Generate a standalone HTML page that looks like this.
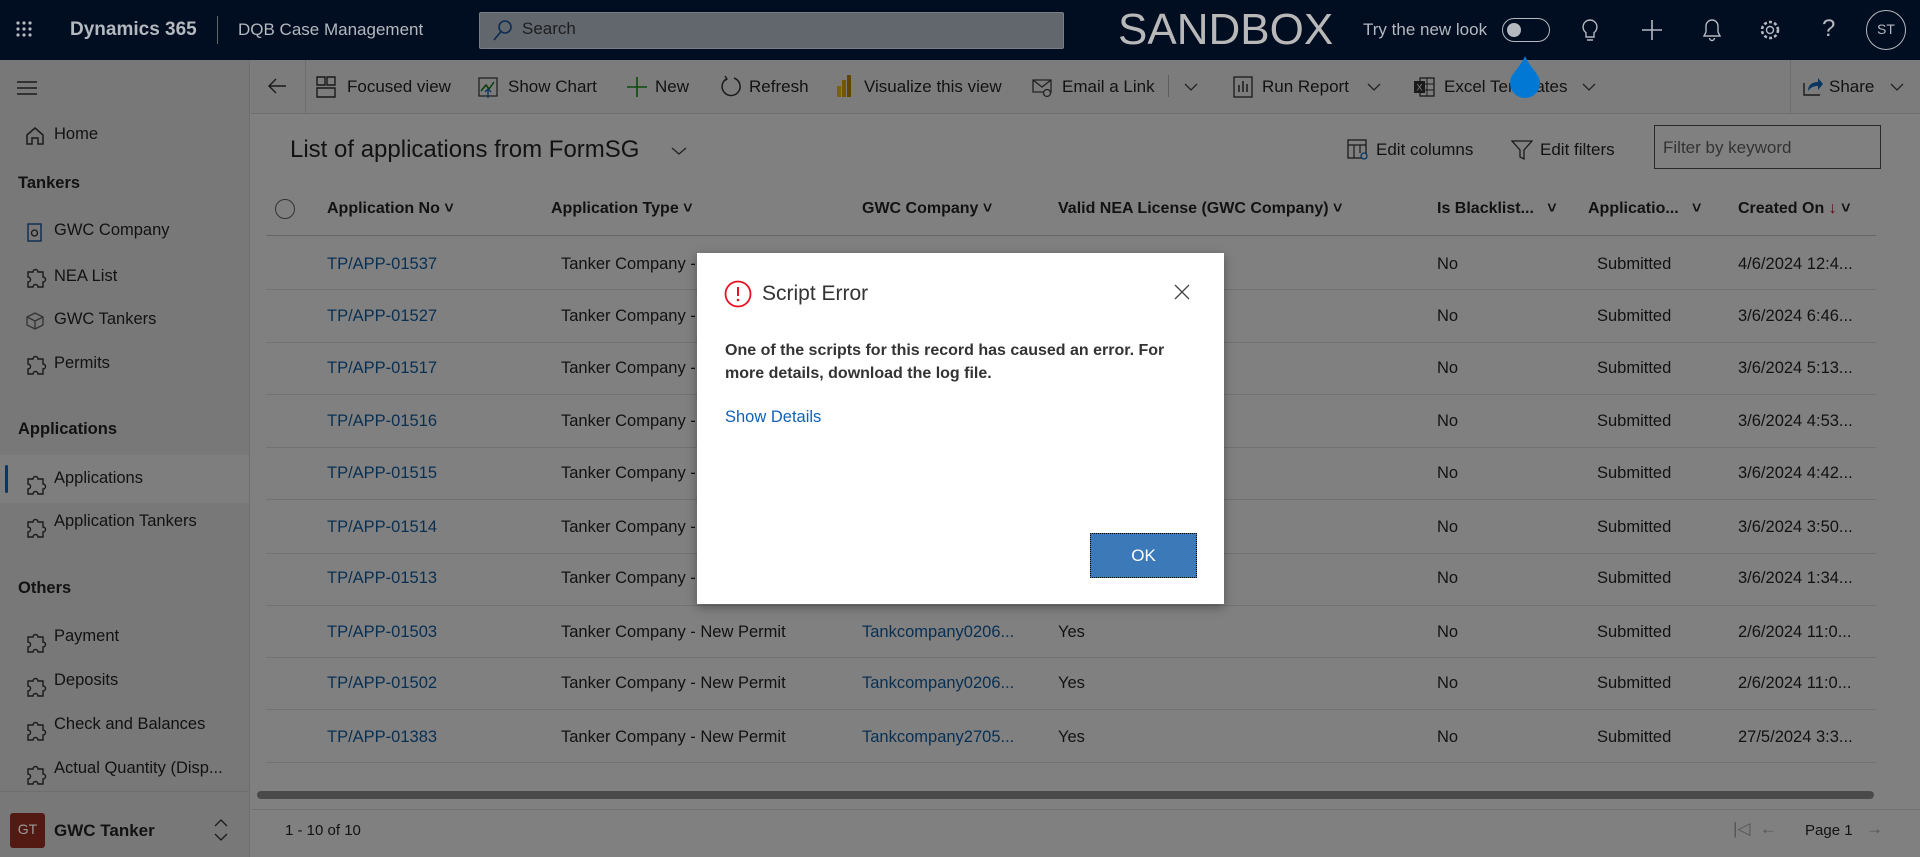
<!DOCTYPE html>
<html><head><meta charset="utf-8"><style>
*{box-sizing:border-box;margin:0;padding:0}
html,body{background:#808080}
body{width:1920px;height:857px;overflow:hidden;position:relative;font-family:"Liberation Sans",sans-serif;color:#121212}
.a{position:absolute;white-space:nowrap}
.hdr{position:absolute;left:0;top:0;width:1920px;height:60px;background:#010d20;color:#b4b8bf}
.side{position:absolute;left:0;top:60px;width:250px;height:797px;background:#787878;border-right:1px solid #6e6e6e}
.si{position:absolute;left:54px;font-size:16.5px;color:#121212}
.sh{position:absolute;left:18px;font-size:16.5px;font-weight:bold;color:#121212}
.ic{position:absolute;left:24px;width:22px;height:22px}
.tb{position:absolute;left:251px;top:60px;width:1669px;height:54px;background:#7c7c7c;border-bottom:1px solid #6e6e6e}
.tt{position:absolute;top:77px;font-size:17px;color:#121212}
.col{position:absolute;top:200px;font-size:16px;font-weight:bold;color:#121212}
.cell{position:absolute;font-size:16.5px;color:#121212}
.lk{color:#082f52}
.row{position:absolute;left:266px;width:1610px;height:1px;background:#727272}
</style></head><body>
<div class="hdr">
 <svg class="a" style="left:15px;top:20px" width="18" height="18"><g fill="#b4b8bf"><circle cx="3" cy="3" r="1.6"/><circle cx="9" cy="3" r="1.6"/><circle cx="15" cy="3" r="1.6"/><circle cx="3" cy="9" r="1.6"/><circle cx="9" cy="9" r="1.6"/><circle cx="15" cy="9" r="1.6"/><circle cx="3" cy="15" r="1.6"/><circle cx="9" cy="15" r="1.6"/><circle cx="15" cy="15" r="1.6"/></g></svg>
 <div class="a" style="left:70px;top:19px;font-size:19px;font-weight:bold">Dynamics 365</div>
 <div class="a" style="left:217px;top:16px;width:1px;height:28px;background:#666"></div>
 <div class="a" style="left:238px;top:20px;font-size:17px">DQB Case Management</div>
 <div class="a" style="left:479px;top:12px;width:585px;height:37px;background:#62666d;border:1px solid #7a7e84;border-radius:2px"></div>
 <svg class="a" style="left:492px;top:19px" width="22" height="24"><circle cx="13" cy="8" r="6" fill="none" stroke="#0c2c50" stroke-width="1.6"/><line x1="9" y1="12.5" x2="2" y2="21" stroke="#0c2c50" stroke-width="1.6"/></svg>
 <div class="a" style="left:522px;top:19px;font-size:17px;color:#1e1e1e">Search</div>
 <div class="a" style="left:1118px;top:5px;font-size:44px;color:#b8b8b8">SANDBOX</div>
 <div class="a" style="left:1363px;top:20px;font-size:17px">Try the new look</div>
 <div class="a" style="left:1502px;top:18px;width:48px;height:24px;border:1.5px solid #b4b8bf;border-radius:12px"></div>
 <div class="a" style="left:1507px;top:23px;width:14px;height:14px;border-radius:50%;background:#b4b8bf"></div>
 <svg class="a" style="left:1580px;top:18px" width="20" height="26"><path d="M10 2a7 7 0 0 0-4 12.7V19h8v-4.3A7 7 0 0 0 10 2zM7 22h6" fill="none" stroke="#b4b8bf" stroke-width="1.4"/></svg>
 <svg class="a" style="left:1641px;top:19px" width="22" height="22"><path d="M11 1v20M1 11h20" stroke="#b4b8bf" stroke-width="1.6"/></svg>
 <svg class="a" style="left:1702px;top:18px" width="20" height="24"><path d="M10 2a6 6 0 0 0-6 6v6l-2 4h16l-2-4V8a6 6 0 0 0-6-6zM7.5 20a2.5 2.5 0 0 0 5 0" fill="none" stroke="#b4b8bf" stroke-width="1.4"/></svg>
 <svg class="a" style="left:1758px;top:18px" width="24" height="24"><circle cx="12" cy="12" r="3.5" fill="none" stroke="#b4b8bf" stroke-width="1.4"/><circle cx="12" cy="12" r="8" fill="none" stroke="#b4b8bf" stroke-width="2.6" stroke-dasharray="3 2.2"/></svg>
 <div class="a" style="left:1822px;top:15px;font-size:24px">?</div>
 <div class="a" style="left:1866px;top:10px;width:40px;height:40px;border:1.5px solid #b4b8bf;border-radius:50%;font-size:14px;text-align:center;line-height:37px">ST</div>
</div>

<div class="side">
 <svg class="a" style="left:17px;top:21px" width="22" height="14"><path d="M0 1h20M0 7h20M0 13h20" stroke="#1a1a1a" stroke-width="1.4"/></svg>
 <svg class="ic" style="top:65px" viewBox="0 0 22 22"><path d="M3 10L11 3l8 7v9h-5v-6h-6v6H3z" fill="none" stroke="#1a1a1a" stroke-width="1.5"/></svg>
 <div class="si" style="top:65px">Home</div>
 <div class="sh" style="top:114px">Tankers</div>
 <svg class="ic" style="top:161px" viewBox="0 0 22 22"><rect x="4" y="3" width="13" height="17" fill="none" stroke="#0c2c50" stroke-width="1.4"/><circle cx="10.5" cy="12" r="3" fill="none" stroke="#1a1a1a" stroke-width="1.3"/></svg>
 <div class="si" style="top:161px">GWC Company</div>
 <div class="si" style="top:207px">NEA List</div>
 <svg class="ic" style="top:250px" viewBox="0 0 22 22"><path d="M3 7l8-4 8 4v8l-8 4-8-4zM3 7l8 4 8-4M11 11v8" fill="none" stroke="#333" stroke-width="1.3"/></svg>
 <div class="si" style="top:250px">GWC Tankers</div>
 <div class="si" style="top:294px">Permits</div>
 <div class="sh" style="top:360px">Applications</div>
 <div class="a" style="left:0;top:395px;width:249px;height:48px;background:#7e7e7e"></div>
 <div class="a" style="left:5px;top:405px;width:3px;height:28px;background:#08365f;border-radius:2px"></div>
 <div class="si" style="top:409px">Applications</div>
 <div class="si" style="top:452px">Application Tankers</div>
 <div class="sh" style="top:519px">Others</div>
 <div class="si" style="top:567px">Payment</div>
 <div class="si" style="top:611px">Deposits</div>
 <div class="si" style="top:655px">Check and Balances</div>
 <div class="si" style="top:699px">Actual Quantity (Disp...</div>
 <div class="a" style="left:0;top:731px;width:250px;height:1px;background:#6e6e6e"></div>
 <div class="a" style="left:10px;top:753px;width:35px;height:35px;background:#521a12;border-radius:3px;color:#9a9a9a;font-size:14px;text-align:center;line-height:33px">GT</div>
 <div class="a" style="left:54px;top:761px;font-size:17px;font-weight:bold">GWC Tanker</div>
 <svg class="a" style="left:213px;top:757px" width="16" height="26"><path d="M2 9l6-6 6 6M2 17l6 6 6-6" fill="none" stroke="#1a1a1a" stroke-width="1.3"/></svg>
</div>
<svg style="position:absolute;left:0;top:0" width="250" height="857">
 <g fill="none" stroke="#1a1a1a" stroke-width="1.4">
 <path d="M28 272h5a2.5 2.5 0 0 1 5 0h5v5a2.5 2.5 0 0 1 0 5v5h-5a2.5 2.5 0 0 0-5 0h-5v-5a2.5 2.5 0 0 0 0-5z"/>
 <path transform="translate(0,87)" d="M28 272h5a2.5 2.5 0 0 1 5 0h5v5a2.5 2.5 0 0 1 0 5v5h-5a2.5 2.5 0 0 0-5 0h-5v-5a2.5 2.5 0 0 0 0-5z"/>
 <path transform="translate(0,207)" d="M28 272h5a2.5 2.5 0 0 1 5 0h5v5a2.5 2.5 0 0 1 0 5v5h-5a2.5 2.5 0 0 0-5 0h-5v-5a2.5 2.5 0 0 0 0-5z"/>
 <path transform="translate(0,250)" d="M28 272h5a2.5 2.5 0 0 1 5 0h5v5a2.5 2.5 0 0 1 0 5v5h-5a2.5 2.5 0 0 0-5 0h-5v-5a2.5 2.5 0 0 0 0-5z"/>
 <path transform="translate(0,365)" d="M28 272h5a2.5 2.5 0 0 1 5 0h5v5a2.5 2.5 0 0 1 0 5v5h-5a2.5 2.5 0 0 0-5 0h-5v-5a2.5 2.5 0 0 0 0-5z"/>
 <path transform="translate(0,409)" d="M28 272h5a2.5 2.5 0 0 1 5 0h5v5a2.5 2.5 0 0 1 0 5v5h-5a2.5 2.5 0 0 0-5 0h-5v-5a2.5 2.5 0 0 0 0-5z"/>
 <path transform="translate(0,453)" d="M28 272h5a2.5 2.5 0 0 1 5 0h5v5a2.5 2.5 0 0 1 0 5v5h-5a2.5 2.5 0 0 0-5 0h-5v-5a2.5 2.5 0 0 0 0-5z"/>
 <path transform="translate(0,497)" d="M28 272h5a2.5 2.5 0 0 1 5 0h5v5a2.5 2.5 0 0 1 0 5v5h-5a2.5 2.5 0 0 0-5 0h-5v-5a2.5 2.5 0 0 0 0-5z"/>
 </g></svg>

<div class="tb">
 <div class="a" style="left:54px;top:0;width:1px;height:54px;background:#6e6e6e"></div>
 <div class="a" style="left:1539px;top:0;width:1px;height:54px;background:#6e6e6e"></div>
</div>
<svg class="a" style="left:266px;top:76px" width="22" height="20"><path d="M20 10H3M10 3l-7 7 7 7" fill="none" stroke="#1a1a1a" stroke-width="1.4"/></svg>
<svg class="a" style="left:316px;top:76px" width="20" height="22"><path d="M1 1h8v8H1zM11 1h8v8h-8zM1 12h18v9H1z" fill="none" stroke="#1a1a1a" stroke-width="1.4"/></svg>
<div class="tt" style="left:347px">Focused view</div>
<svg class="a" style="left:478px;top:77px" width="20" height="22"><rect x="1" y="1" width="18" height="18" fill="none" stroke="#222" stroke-width="1.3"/><path d="M3 14l5-6 3 4 5-7" fill="none" stroke="#083e08" stroke-width="1.5"/><path d="M10 21V12M7 15l3-3 3 3" fill="none" stroke="#083660" stroke-width="1.4"/></svg>
<div class="tt" style="left:508px">Show Chart</div>
<svg class="a" style="left:626px;top:76px" width="22" height="22"><path d="M11 1v20M1 11h20" stroke="#0b4a0b" stroke-width="1.6"/></svg>
<div class="tt" style="left:655px">New</div>
<svg class="a" style="left:719px;top:75px" width="24" height="24"><path d="M8 3.5A9 9 0 1 0 15 3" fill="none" stroke="#1a1a1a" stroke-width="1.5"/><path d="M6 1l2 3-3 2" fill="none" stroke="#1a1a1a" stroke-width="1.4"/></svg>
<div class="tt" style="left:749px">Refresh</div>
<svg class="a" style="left:836px;top:74px" width="16" height="24"><rect x="1" y="12" width="4" height="11" fill="#796408"/><rect x="6" y="6" width="4" height="17" fill="#745800"/><rect x="11" y="1" width="4" height="22" fill="#624500"/></svg>
<div class="tt" style="left:864px">Visualize this view</div>
<svg class="a" style="left:1032px;top:77px" width="22" height="22"><path d="M1 3h18v12H1zM1 3l9 7 9-7" fill="none" stroke="#222" stroke-width="1.3"/><circle cx="15" cy="16" r="3.5" fill="#7c7c7c" stroke="#222" stroke-width="1.3"/></svg>
<div class="tt" style="left:1062px">Email a Link</div>
<div class="a" style="left:1168px;top:75px;width:1px;height:22px;background:#5e5e5e"></div>
<svg class="a" style="left:1184px;top:82px" width="14" height="10"><path d="M1 2l6 6 6-6" fill="none" stroke="#222" stroke-width="1.3"/></svg>
<svg class="a" style="left:1233px;top:76px" width="20" height="22"><rect x="1" y="1" width="18" height="20" fill="none" stroke="#1a1a1a" stroke-width="1.3"/><path d="M6 16V9M10 16V5M14 16V8" stroke="#1a1a1a" stroke-width="1.5"/></svg>
<div class="tt" style="left:1262px">Run Report</div>
<svg class="a" style="left:1367px;top:82px" width="14" height="10"><path d="M1 2l6 6 6-6" fill="none" stroke="#222" stroke-width="1.3"/></svg>
<svg class="a" style="left:1413px;top:76px" width="22" height="22"><rect x="7" y="2" width="14" height="18" fill="none" stroke="#1a1a1a" stroke-width="1.3"/><path d="M7 8h14M7 14h14M14 2v18" stroke="#1a1a1a" stroke-width="1"/><rect x="1" y="5" width="11" height="12" fill="#1a1a1a"/><text x="3.5" y="14.5" font-size="9" fill="#808080" font-family="Liberation Sans">X</text></svg>
<div class="tt" style="left:1444px">Excel Templates</div>
<svg class="a" style="left:1582px;top:82px" width="14" height="10"><path d="M1 2l6 6 6-6" fill="none" stroke="#222" stroke-width="1.3"/></svg>
<svg class="a" style="left:1802px;top:75px" width="22" height="22"><path d="M2 8v12h16" fill="none" stroke="#1a1a1a" stroke-width="1.4"/><path d="M6 16c0-6 4-9 10-9V3l5 6-5 6v-4c-4 0-7 1-10 5z" fill="#083660"/></svg>
<div class="tt" style="left:1829px">Share</div>
<svg class="a" style="left:1890px;top:82px" width="14" height="10"><path d="M1 2l6 6 6-6" fill="none" stroke="#222" stroke-width="1.3"/></svg>

<div class="a" style="left:290px;top:136px;font-size:24px;color:#121212">List of applications from FormSG</div>
<svg class="a" style="left:671px;top:146px" width="16" height="10"><path d="M1 2l7 6 7-6" fill="none" stroke="#222" stroke-width="1.3"/></svg>
<svg class="a" style="left:1347px;top:139px" width="22" height="22"><rect x="1" y="1" width="18" height="18" fill="none" stroke="#1a1a1a" stroke-width="1.3"/><path d="M1 6h18M7 6v13M13 6v8" stroke="#1a1a1a" stroke-width="1.2"/><circle cx="17" cy="17" r="3" fill="#808080" stroke="#083660" stroke-width="1.3"/></svg>
<div class="a" style="left:1376px;top:140px;font-size:17px">Edit columns</div>
<svg class="a" style="left:1511px;top:139px" width="22" height="22"><path d="M1 2h20l-8 9v9l-4-2v-7z" fill="none" stroke="#1a1a1a" stroke-width="1.3"/></svg>
<div class="a" style="left:1540px;top:140px;font-size:17px">Edit filters</div>
<div class="a" style="left:1654px;top:125px;width:227px;height:44px;border:1px solid #2a2a2a;background:#808080"></div>
<div class="a" style="left:1663px;top:138px;font-size:17px;color:#333">Filter by keyword</div>

<div class="a" style="left:275px;top:199px;width:20px;height:20px;border:1px solid #333;border-radius:50%"></div>
<div class="col" style="left:327px">Application No ˅</div>
<div class="col" style="left:551px">Application Type ˅</div>
<div class="col" style="left:862px">GWC Company ˅</div>
<div class="col" style="left:1058px">Valid NEA License (GWC Company) ˅</div>
<div class="col" style="left:1437px">Is Blacklist... &nbsp; ˅</div>
<div class="col" style="left:1588px">Applicatio... &nbsp; ˅</div>
<div class="col" style="left:1738px">Created On <span style="color:#60061a">↓</span> ˅</div>
<div class="row" style="top:235px;background:#666"></div>

<div class="cell lk" style="left:327px;top:255px">TP/APP-01537</div><div class="cell" style="left:561px;top:255px">Tanker Company - New Permit</div><div class="cell" style="left:1437px;top:255px">No</div><div class="cell" style="left:1597px;top:255px">Submitted</div><div class="cell" style="left:1738px;top:255px">4/6/2024 12:4...</div><div class="row" style="top:289px"></div>
<div class="cell lk" style="left:327px;top:307px">TP/APP-01527</div><div class="cell" style="left:561px;top:307px">Tanker Company - New Permit</div><div class="cell" style="left:1437px;top:307px">No</div><div class="cell" style="left:1597px;top:307px">Submitted</div><div class="cell" style="left:1738px;top:307px">3/6/2024 6:46...</div><div class="row" style="top:342px"></div>
<div class="cell lk" style="left:327px;top:359px">TP/APP-01517</div><div class="cell" style="left:561px;top:359px">Tanker Company - New Permit</div><div class="cell" style="left:1437px;top:359px">No</div><div class="cell" style="left:1597px;top:359px">Submitted</div><div class="cell" style="left:1738px;top:359px">3/6/2024 5:13...</div><div class="row" style="top:394px"></div>
<div class="cell lk" style="left:327px;top:412px">TP/APP-01516</div><div class="cell" style="left:561px;top:412px">Tanker Company - New Permit</div><div class="cell" style="left:1437px;top:412px">No</div><div class="cell" style="left:1597px;top:412px">Submitted</div><div class="cell" style="left:1738px;top:412px">3/6/2024 4:53...</div><div class="row" style="top:447px"></div>
<div class="cell lk" style="left:327px;top:464px">TP/APP-01515</div><div class="cell" style="left:561px;top:464px">Tanker Company - New Permit</div><div class="cell" style="left:1437px;top:464px">No</div><div class="cell" style="left:1597px;top:464px">Submitted</div><div class="cell" style="left:1738px;top:464px">3/6/2024 4:42...</div><div class="row" style="top:499px"></div>
<div class="cell lk" style="left:327px;top:518px">TP/APP-01514</div><div class="cell" style="left:561px;top:518px">Tanker Company - New Permit</div><div class="cell" style="left:1437px;top:518px">No</div><div class="cell" style="left:1597px;top:518px">Submitted</div><div class="cell" style="left:1738px;top:518px">3/6/2024 3:50...</div><div class="row" style="top:553px"></div>
<div class="cell lk" style="left:327px;top:569px">TP/APP-01513</div><div class="cell" style="left:561px;top:569px">Tanker Company - New Permit</div><div class="cell" style="left:1437px;top:569px">No</div><div class="cell" style="left:1597px;top:569px">Submitted</div><div class="cell" style="left:1738px;top:569px">3/6/2024 1:34...</div><div class="row" style="top:605px"></div>
<div class="cell lk" style="left:327px;top:623px">TP/APP-01503</div><div class="cell" style="left:561px;top:623px">Tanker Company - New Permit</div><div class="cell lk" style="left:862px;top:623px">Tankcompany0206...</div><div class="cell" style="left:1058px;top:623px">Yes</div><div class="cell" style="left:1437px;top:623px">No</div><div class="cell" style="left:1597px;top:623px">Submitted</div><div class="cell" style="left:1738px;top:623px">2/6/2024 11:0...</div><div class="row" style="top:657px"></div>
<div class="cell lk" style="left:327px;top:674px">TP/APP-01502</div><div class="cell" style="left:561px;top:674px">Tanker Company - New Permit</div><div class="cell lk" style="left:862px;top:674px">Tankcompany0206...</div><div class="cell" style="left:1058px;top:674px">Yes</div><div class="cell" style="left:1437px;top:674px">No</div><div class="cell" style="left:1597px;top:674px">Submitted</div><div class="cell" style="left:1738px;top:674px">2/6/2024 11:0...</div><div class="row" style="top:709px"></div>
<div class="cell lk" style="left:327px;top:728px">TP/APP-01383</div><div class="cell" style="left:561px;top:728px">Tanker Company - New Permit</div><div class="cell lk" style="left:862px;top:728px">Tankcompany2705...</div><div class="cell" style="left:1058px;top:728px">Yes</div><div class="cell" style="left:1437px;top:728px">No</div><div class="cell" style="left:1597px;top:728px">Submitted</div><div class="cell" style="left:1738px;top:728px">27/5/2024 3:3...</div><div class="row" style="top:762px"></div>

<div class="a" style="left:257px;top:791px;width:1617px;height:8px;background:#4a4a4a;border-radius:4px"></div>
<div class="a" style="left:251px;top:809px;width:1669px;height:1px;background:#727272"></div>
<div class="a" style="left:285px;top:822px;font-size:15px">1 - 10 of 10</div>
<div class="a" style="left:1733px;top:819px;font-size:17px;color:#555">|◁ &nbsp;←</div>
<div class="a" style="left:1805px;top:822px;font-size:15px">Page 1</div>
<div class="a" style="left:1866px;top:819px;font-size:17px;color:#555">→</div>

<svg class="a" style="left:1504px;top:54px" width="42" height="44"><path d="M21 2C16 14 6 20 6 29a15 15 0 0 0 30 0C36 20 26 14 21 2z" fill="#0078d4"/></svg>

<div class="a" style="left:697px;top:253px;width:527px;height:351px;background:#fff;box-shadow:0 3px 10px rgba(0,0,0,0.35)"></div>
<svg class="a" style="left:724px;top:280px" width="28" height="28"><circle cx="14" cy="14" r="12.5" fill="none" stroke="#e81123" stroke-width="1.8"/><path d="M14 7v9" stroke="#e81123" stroke-width="2"/><circle cx="14" cy="20" r="1.3" fill="#e81123"/></svg>
<div class="a" style="left:762px;top:282px;font-size:21px;color:#333">Script Error</div>
<svg class="a" style="left:1174px;top:284px" width="16" height="16"><path d="M1 1l14 14M15 1L1 15" stroke="#444" stroke-width="1.3"/></svg>
<div class="a" style="left:725px;top:339px;font-size:16px;font-weight:bold;color:#333;line-height:23px">One of the scripts for this record has caused an error. For<br>more details, download the log file.</div>
<div class="a" style="left:725px;top:408px;font-size:16.5px;color:#1160b7">Show Details</div>
<div class="a" style="left:1090px;top:533px;width:107px;height:45px;background:#3b79b8;border:1px dotted #000;color:#fff;font-size:17px;text-align:center;line-height:43px">OK</div>
</body></html>
